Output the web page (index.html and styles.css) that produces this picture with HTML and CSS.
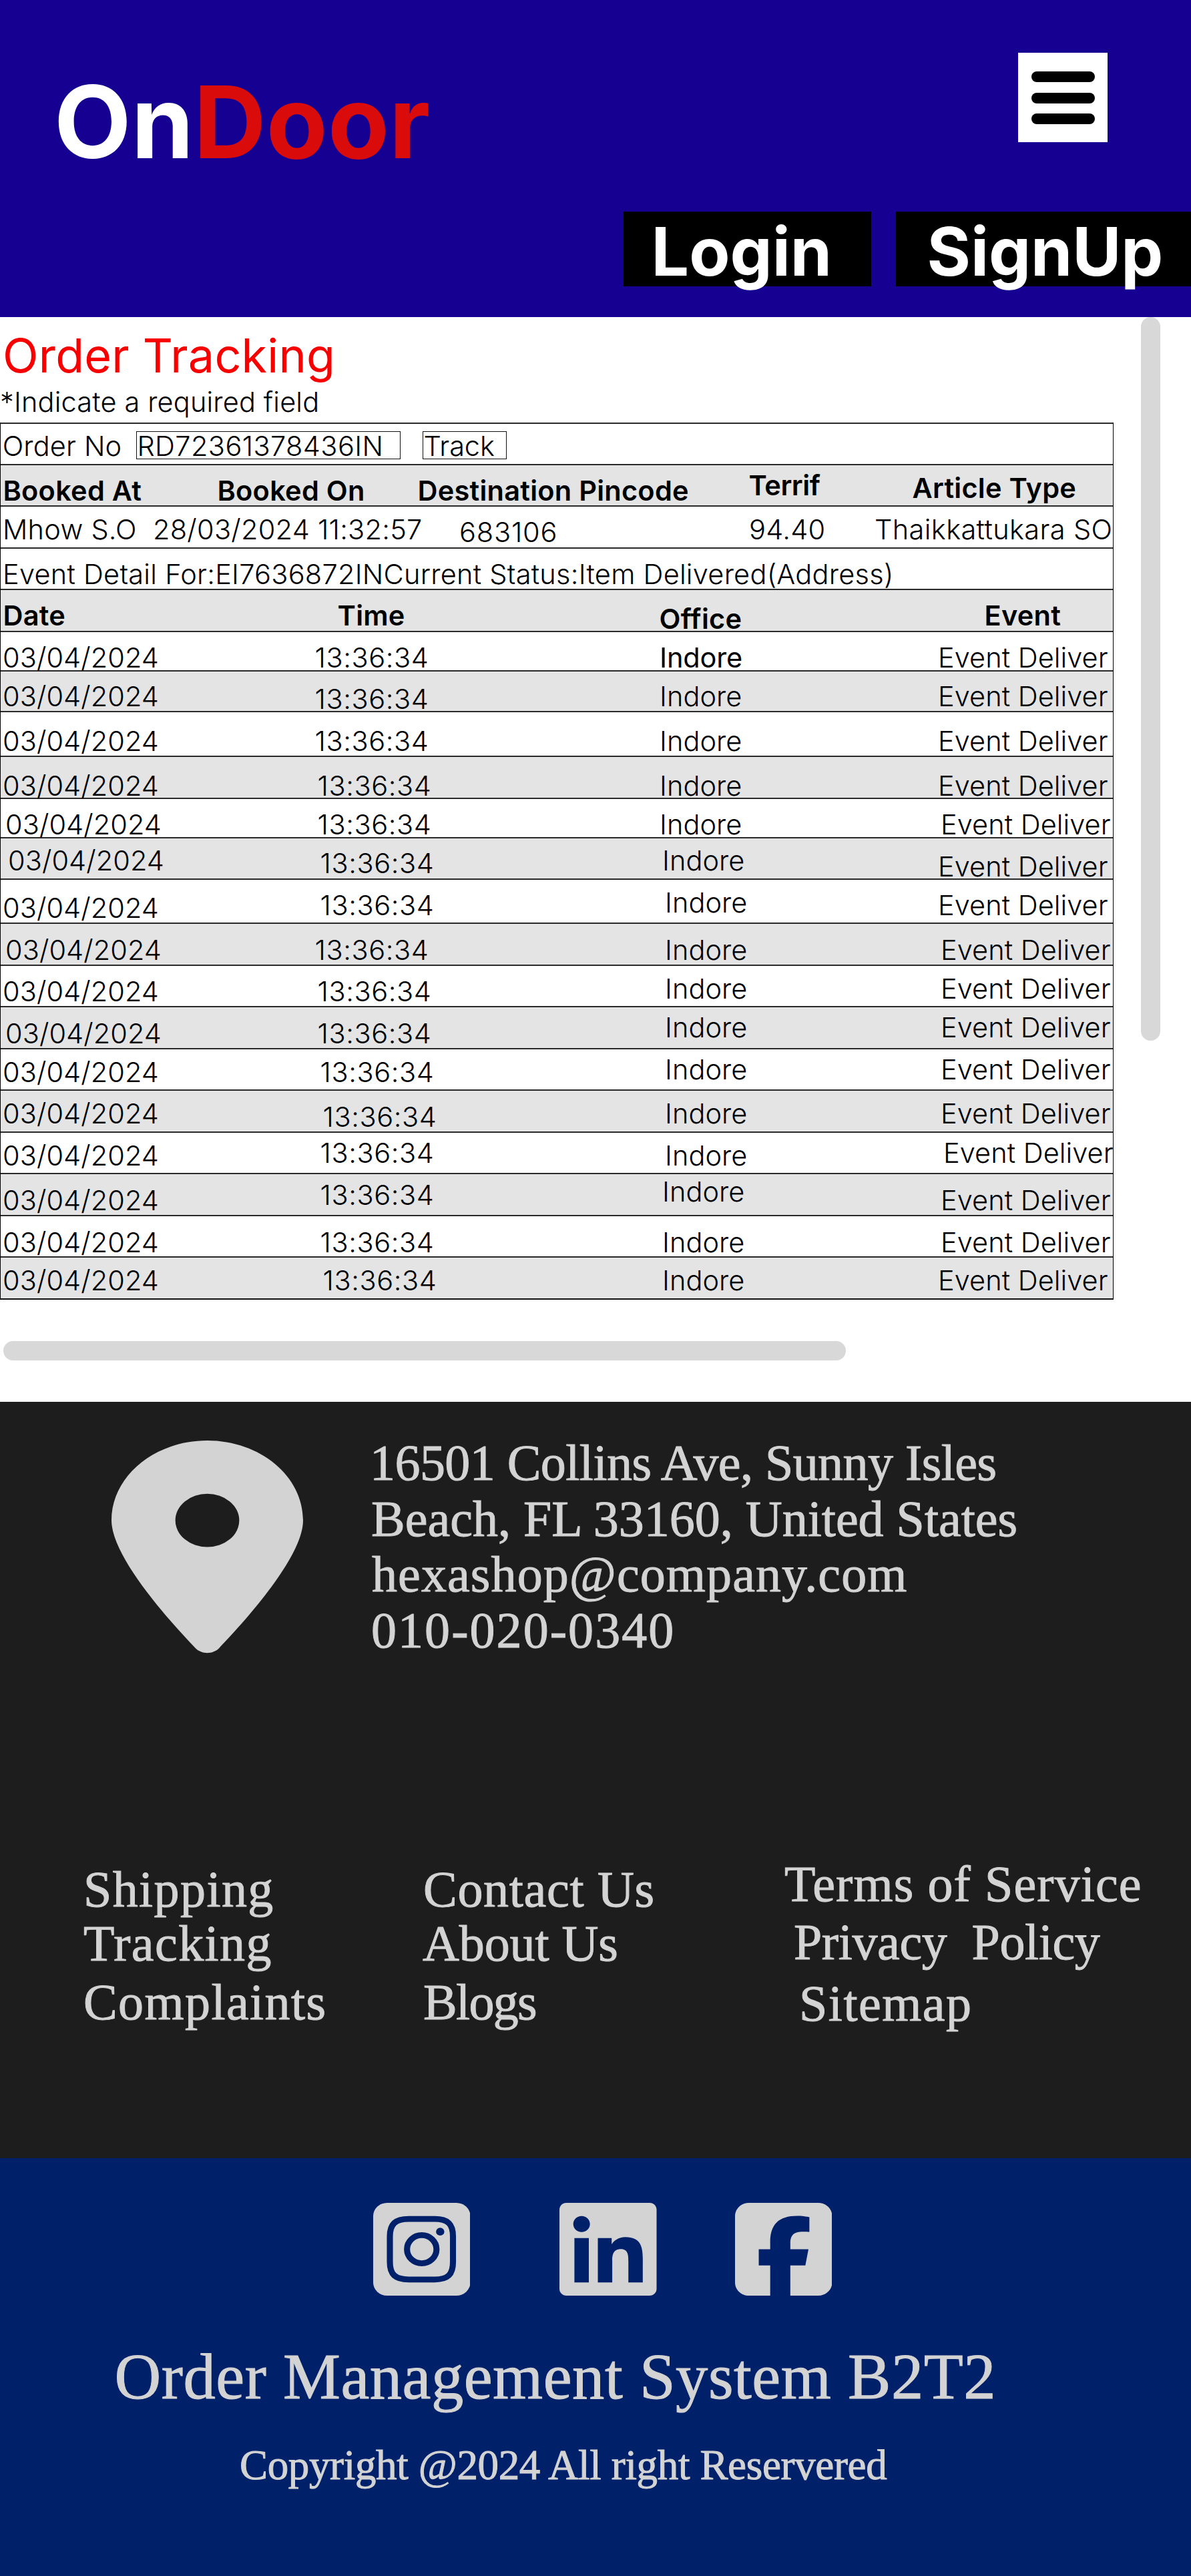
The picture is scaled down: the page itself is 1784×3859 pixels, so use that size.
FILE: index.html
```html
<!DOCTYPE html>
<html lang="en">
<head>
<meta charset="utf-8">
<title>OnDoor - Order Tracking</title>
<link rel="stylesheet" href="styles.css">
</head>
<body>
<header class="header">
  <div class="header-top">
    <div class="logo">On<span class="logo-accent">Door</span></div>
    <div class="menu"><span class="bar"></span><span class="bar"></span><span class="bar"></span></div>
  </div>
  <nav class="auth">
    <a class="auth-btn login">Login</a>
    <a class="auth-btn signup">SignUp</a>
  </nav>
</header>

<main class="main">
  <div class="content">
    <h1 class="title">Order Tracking</h1>
    <p class="hint">*Indicate a required field</p>
    <div class="table">
      <div class="row h62 search">
        <span class="mt8 order-label">Order No</span>
        <span class="box order-input">RD72361378436IN</span>
        <span class="box track-btn">Track</span>
      </div>
      <div class="row h62 shade head book-head"><span class="mt13">Booked At</span><span class="mt13">Booked On</span><span class="mt13">Destination Pincode</span><span class="mt5 tight">Terrif</span><span class="mt9">Article Type</span></div>
      <div class="row h63 book"><span class="mt9">Mhow S.O</span><span class="mt9">28/03/2024 11:32:57</span><span class="mt13 wide">683106</span><span class="mt9">94.40</span><span class="mt9 thaik">Thaikkattukara SO</span></div>
      <div class="row h62 detail"><span class="mt13">Event Detail For:EI7636872INCurrent Status:Item Delivered(Address)</span></div>
      <div class="row h63 shade head event-head"><span class="mt13">Date</span><span class="mt13">Time</span><span class="mt18">Office</span><span class="mt13">Event</span></div>

      <div class="row h59 event"><span class="mt13">03/04/2024</span><span class="mt13">13:36:34</span><span class="mt13 strong">Indore</span><span class="mt13">Event Deliver</span></div>
      <div class="row h61 shade event"><span class="mt12">03/04/2024</span><span class="mt16">13:36:34</span><span class="mt12">Indore</span><span class="mt12">Event Deliver</span></div>
      <div class="row h67 event"><span class="mt18">03/04/2024</span><span class="mt18">13:36:34</span><span class="mt18">Indore</span><span class="mt18">Event Deliver</span></div>
      <div class="row h63 shade event"><span class="mt18">03/04/2024</span><span class="mt18 dx1">13:36:34</span><span class="mt18">Indore</span><span class="mt18">Event Deliver</span></div>
      <div class="row h59 event"><span class="mt13 dx1">03/04/2024</span><span class="mt13 dx1">13:36:34</span><span class="mt13">Indore</span><span class="mt13 dx1">Event Deliver</span></div>
      <div class="row h62 shade event"><span class="mt8 dx2">03/04/2024</span><span class="mt12 dx2">13:36:34</span><span class="mt8 dx1">Indore</span><span class="mt17">Event Deliver</span></div>
      <div class="row h66 event"><span class="mt17">03/04/2024</span><span class="mt13 dx2">13:36:34</span><span class="mt9 dx2">Indore</span><span class="mt13">Event Deliver</span></div>
      <div class="row h63 shade event"><span class="mt14 dx1">03/04/2024</span><span class="mt14">13:36:34</span><span class="mt14 dx2">Indore</span><span class="mt14 dx1">Event Deliver</span></div>
      <div class="row h62 event"><span class="mt13">03/04/2024</span><span class="mt13 dx1">13:36:34</span><span class="mt9 dx2">Indore</span><span class="mt9 dx1">Event Deliver</span></div>
      <div class="row h63 shade event"><span class="mt14 dx1">03/04/2024</span><span class="mt14 dx1">13:36:34</span><span class="mt5 dx2">Indore</span><span class="mt5 dx1">Event Deliver</span></div>
      <div class="row h62 event"><span class="mt9">03/04/2024</span><span class="mt9 dx2">13:36:34</span><span class="mt5 dx2">Indore</span><span class="mt5 dx1">Event Deliver</span></div>
      <div class="row h63 shade event"><span class="mt9">03/04/2024</span><span class="mt14 dx3">13:36:34</span><span class="mt9 dx2">Indore</span><span class="mt9 dx1">Event Deliver</span></div>
      <div class="row h62 event"><span class="mt9">03/04/2024</span><span class="mt5 dx2">13:36:34</span><span class="mt9 dx2">Indore</span><span class="mt5 dx2">Event Deliver</span></div>
      <div class="row h63 shade event"><span class="mt14">03/04/2024</span><span class="mt6 dx2">13:36:34</span><span class="mt1 dx1">Indore</span><span class="mt14 dx1">Event Deliver</span></div>
      <div class="row h62 event"><span class="mt14">03/04/2024</span><span class="mt14 dx2">13:36:34</span><span class="mt14 dx1">Indore</span><span class="mt14 dx1">Event Deliver</span></div>
      <div class="row h63 shade event"><span class="mt9">03/04/2024</span><span class="mt9 dx3">13:36:34</span><span class="mt9 dx1">Indore</span><span class="mt9">Event Deliver</span></div>
    </div>
    <div class="scroll-x"></div>
  </div>
  <div class="scroll-y"></div>
</main>

<footer>
  <div class="info">
    <div class="contact">
      <svg class="pin" viewBox="0 0 384 512" preserveAspectRatio="none"><path fill="#d3d3d3" d="M215.7 499.2C267 435 384 279.4 384 192C384 86 298 0 192 0S0 86 0 192c0 87.4 117 243 168.3 307.2c12.3 15.3 35.1 15.3 47.4 0zM192 128a64 64 0 1 1 0 128 64 64 0 1 1 0-128z"/></svg>
      <div class="address">
        <span class="line-street">16501 Collins Ave, Sunny Isles</span>
        <span class="line-city">Beach, FL 33160, United States</span>
        <span class="line-mail">hexashop@company.com</span>
        <span class="line-phone">010-020-0340</span>
      </div>
    </div>
    <div class="links">
      <div class="link-col first"><a>Shipping</a><a>Tracking</a><a class="last">Complaints</a></div>
      <div class="link-col second"><a class="contact-us">Contact Us</a><a class="about-us">About Us</a><a class="last blogs">Blogs</a></div>
      <div class="link-col third"><a class="terms">Terms of Service</a><a class="privacy">Privacy&nbsp; Policy</a><a class="sitemap">Sitemap</a></div>
    </div>
  </div>
  <div class="bottom">
    <div class="social">
      <svg class="soc" viewBox="0 32 448 448" preserveAspectRatio="none"><rect y="32" width="448" height="448" rx="64" fill="#d3d3d3"/><g fill="none" stroke="#00216a" stroke-width="28"><path d="M164 110h120c60 0 84 24 84 84v124c0 60-24 84-84 84H164c-62 0-87-24-87-84V194c0-60 25-84 87-84z"/><circle cx="224" cy="256" r="68"/></g><circle cx="309" cy="171" r="19" fill="#00216a"/></svg>
      <svg class="soc" viewBox="0 32 448 448" preserveAspectRatio="none"><path fill="#d3d3d3" d="M416 32H31.9C14.3 32 0 46.5 0 64.3v383.4C0 465.5 14.3 480 31.9 480H416c17.6 0 32-14.5 32-32.3V64.3c0-17.8-14.4-32.3-32-32.3zM135.4 416H69V202.2h66.5V416zm-33.2-243c-21.3 0-38.5-17.3-38.5-38.5S80.9 96 102.2 96c21.2 0 38.5 17.3 38.5 38.5 0 21.3-17.2 38.5-38.5 38.5zm282.1 243h-66.4V312c0-24.8-.5-56.7-34.5-56.7-34.6 0-39.9 27-39.9 54.9V416h-66.4V202.2h63.7v29.2h.9c8.9-16.8 30.6-34.5 62.9-34.5 67.2 0 79.7 44.3 79.7 101.9V416z"/></svg>
      <svg class="soc" viewBox="0 32 448 448" preserveAspectRatio="none"><path fill="#d3d3d3" d="M64 32C28.7 32 0 60.7 0 96V416c0 35.3 28.7 64 64 64h98.2V334.2H109.4V256h52.8V222.3c0-87.1 39.4-127.5 125-127.5c16.2 0 44.2 3.2 55.7 6.4V172c-6-.6-16.5-1-29.6-1c-42 0-58.2 15.9-58.2 57.2V256h83.6l-14.4 78.2H255V480H384c35.3 0 64-28.7 64-64V96c0-35.3-28.7-64-64-64H64z"/></svg>
    </div>
    <p class="system">Order Management System B2T2</p>
    <p class="copyright">Copyright @2024 All right Reservered</p>
  </div>
</footer>
</body>
</html>
```
FILE: styles.css
```css
* { box-sizing: border-box; }
body { margin: 0; width: 1784px; background: #fff; color: #000; font-family: Inter, "Liberation Sans", sans-serif; overflow-x: hidden; }
h1, p { margin: 0; font-weight: 400; }

/* Header */
.header { height: 475px; background: #160091; }
.header-top { display: flex; justify-content: space-between; align-items: flex-start; height: 317px; padding: 79px 125px 0 81px; }
.logo { margin-top: 14px; font-size: 150px; line-height: 180px; font-weight: 700; letter-spacing: .15px; color: #fff; }
.logo-accent { color: #d90b0b; }
.menu { display: flex; flex-direction: column; gap: 15.5px; width: 134px; height: 134px; padding: 28px 19px 0 20px; background: #fff; }
.bar { height: 16px; border-radius: 8px; background: #000; }
.auth { display: flex; justify-content: flex-end; gap: 37px; }
.auth-btn { height: 112px; background: #000; color: #fff; font-size: 100px; line-height: 119px; font-weight: 700; }
.login { width: 371px; padding-left: 41.6px; }
.signup { width: 442px; padding-left: 46.6px; letter-spacing: -.1px; }

/* Tracking */
.main { display: flex; height: 1625px; }
.content { width: 1668px; padding-top: 16px; }
.title { padding-left: 4px; font-size: 70px; line-height: 84px; letter-spacing: .23px; color: #f80000; }
.hint { margin-top: 2px; font-size: 41.5px; line-height: 50px; font-weight: 300; letter-spacing: .15px; }
.table { width: 1668px; margin-top: 6px; border: 1px solid #000; border-top: 0; border-bottom: 2px solid #111; font-size: 41.5px; line-height: 50px; font-weight: 300; letter-spacing: .25px; white-space: nowrap; }
.row { display: grid; align-items: start; border-top: 2px solid #2a2a2a; }
.shade { background: #e4e4e4; }
.head { font-weight: 600; }
.search { display: flex; }
.order-label { width: 200.4px; padding-left: 2.7px; margin-right: 3px; letter-spacing: .15px; }
.box { height: 42px; margin-top: 11px; border: 1px solid #111; line-height: 42px; }
.order-input { width: 396px; letter-spacing: .4px; }
.track-btn { width: 126px; margin-left: 33px; letter-spacing: -.1px; }
.book-head { grid-template-columns: 321px 300px 496px 245px 1fr; padding-left: 3.5px; }
.book { grid-template-columns: 225px 459px 434px 188px 1fr; padding-left: 3px; }
.detail { padding-left: 3px; }
.event-head { grid-template-columns: 501px 482px 487px 1fr; padding-left: 3.5px; }
.event { grid-template-columns: 467.5px 516.5px 417px 1fr; padding-left: 3px; letter-spacing: .05px; }
.event span:nth-child(2) { letter-spacing: .6px; }
.tight { letter-spacing: -.4px; }
.wide { letter-spacing: .8px; }
.thaik { letter-spacing: .38px; }
.strong { font-weight: 400; letter-spacing: -.2px; }

.h59 { height: 59px; } .h61 { height: 61px; } .h62 { height: 62px; } .h63 { height: 63px; } .h66 { height: 66px; } .h67 { height: 67px; }
.mt1 { margin-top: 1px; } .mt5 { margin-top: 5px; } .mt6 { margin-top: 6px; } .mt8 { margin-top: 8px; } .mt9 { margin-top: 9px; }
.mt12 { margin-top: 12px; } .mt13 { margin-top: 13px; } .mt14 { margin-top: 14px; } .mt16 { margin-top: 16px; } .mt17 { margin-top: 17px; } .mt18 { margin-top: 18px; }
.dx1 { margin-left: 4px; } .dx2 { margin-left: 8px; } .dx3 { margin-left: 12px; }

.row > span { height: 42px; }
.scroll-x { width: 1262px; height: 29px; margin: 62px 0 0 5px; border-radius: 15px; background: #d8d8d8; }
.scroll-y { width: 29px; height: 1084px; margin-left: 41px; border-radius: 15px; background: #d8d8d8; }

/* Footer */
footer { color: #d3d3d3; font-family: "Liberation Serif", serif; font-size: 76px; white-space: nowrap; -webkit-text-stroke: 1px #d3d3d3; }
.info { height: 1133px; padding-top: 50px; background: #1d1d1d; }
.contact { display: flex; height: 632px; padding-left: 167px; }
.pin { width: 287px; height: 319px; margin-top: 8px; }
.address { display: flex; flex-direction: column; margin-left: 102px; line-height: 83.67px; }
.line-street { margin-left: -2px; letter-spacing: -.55px; }
.line-mail { padding-left: 1px; letter-spacing: 1.1px; }
.line-phone { letter-spacing: 2.06px; }
.links { display: grid; grid-template-columns: 509px 541px 1fr; padding-left: 125px; line-height: 81px; letter-spacing: 1.4px; }
.link-col { display: flex; flex-direction: column; padding-top: 8px; }
.last { margin-top: 7px; }
.contact-us { letter-spacing: .7px; }
.about-us { letter-spacing: -.1px; margin-left: -1px; }
.blogs { letter-spacing: -1.7px; }
.third { padding-top: 0; }
.terms { letter-spacing: 1.1px; }
.privacy { margin: 6px 0 0 14px; letter-spacing: -.4px; }
.sitemap { margin: 11px 0 0 22px; letter-spacing: 1.5px; }
.bottom { height: 626px; padding-top: 67px; background: #00216a; }
.social { display: flex; height: 139px; padding-left: 558.5px; }
.soc { width: 145.5px; height: 139px; }
.soc:nth-child(2) { margin-left: 134px; }
.soc:nth-child(3) { margin-left: 117px; }
.system { margin-top: 72px; padding-left: 171.6px; font-size: 96.6px; line-height: 100px; letter-spacing: .5px; }
.copyright { margin-top: 47px; padding-left: 359px; font-size: 63px; line-height: 70px; letter-spacing: -.35px; }
```
